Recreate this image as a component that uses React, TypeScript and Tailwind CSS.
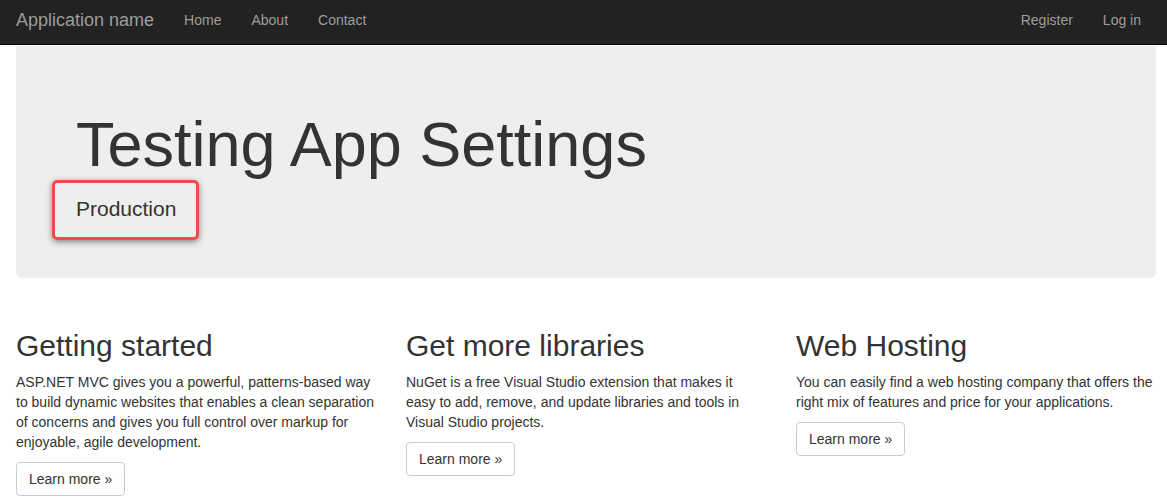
import React from 'react';

const leftLinks = ['Home', 'About', 'Contact'];
const rightLinks = ['Register', 'Log in'];

const columns = [
  {
    title: 'Getting started',
    body: 'ASP.NET MVC gives you a powerful, patterns-based way to build dynamic websites that enables a clean separation of concerns and gives you full control over markup for enjoyable, agile development.',
  },
  {
    title: 'Get more libraries',
    body: 'NuGet is a free Visual Studio extension that makes it easy to add, remove, and update libraries and tools in Visual Studio projects.',
  },
  {
    title: 'Web Hosting',
    body: 'You can easily find a web hosting company that offers the right mix of features and price for your applications.',
  },
];

const App: React.FC = () => {
  return (
    <div
      className="min-h-screen w-full overflow-hidden bg-white text-[#333]"
      style={{ fontFamily: '"Liberation Sans", Arial, Helvetica, sans-serif' }}
    >
      {/* Navbar */}
      <nav className="h-[45px] bg-[#222] border-b border-[#080808] flex justify-between pl-px pr-[11px] pt-[10px]">
        <div className="flex items-start">
          <a className="px-[15px] text-[18px] leading-[20px] text-[#9d9d9d]">Application name</a>
          <ul className="flex">
            {leftLinks.map((l) => (
              <li key={l} className="px-[15px] text-[14px] leading-[20px] text-[#9d9d9d]">{l}</li>
            ))}
          </ul>
        </div>
        <ul className="flex items-start">
          {rightLinks.map((l) => (
            <li key={l} className="px-[15px] text-[14px] leading-[20px] text-[#9d9d9d]">{l}</li>
          ))}
        </ul>
      </nav>

      <div className="pl-[16px] pt-px">
        {/* Jumbotron */}
        <div className="w-[1140px] bg-[#eee] rounded-b-[6px] pl-[60px] pt-[64px] pb-[54px]">
          <h1 className="text-[63px] leading-[1.1] m-0">Testing App Settings</h1>
          <div className="relative mt-[15px]">
            <p className="text-[21px] leading-[30px]">Production</p>
            <div className="absolute -left-[24px] -top-[14px] w-[147px] h-[60px] border-[3px] border-[#f24a4a] rounded-[5px] shadow-[0_2px_6px_rgba(0,0,0,0.45)]"></div>
          </div>
        </div>

        {/* Columns */}
        <div className="grid grid-cols-[390px_390px_360px] mt-[51px] items-start">
          {columns.map((c) => (
            <div key={c.title} className="w-[360px]">
              <h2 className="text-[30px] leading-[33px]">{c.title}</h2>
              <p className="mt-[10px] text-[14px] leading-[20px]">{c.body}</p>
              <button className="mt-[10px] px-[12px] py-[6px] text-[14px] leading-[20px] bg-white border border-[#ccc] rounded-[4px] text-[#333]">
                Learn more &raquo;
              </button>
            </div>
          ))}
        </div>
      </div>
    </div>
  );
};

export default App;
